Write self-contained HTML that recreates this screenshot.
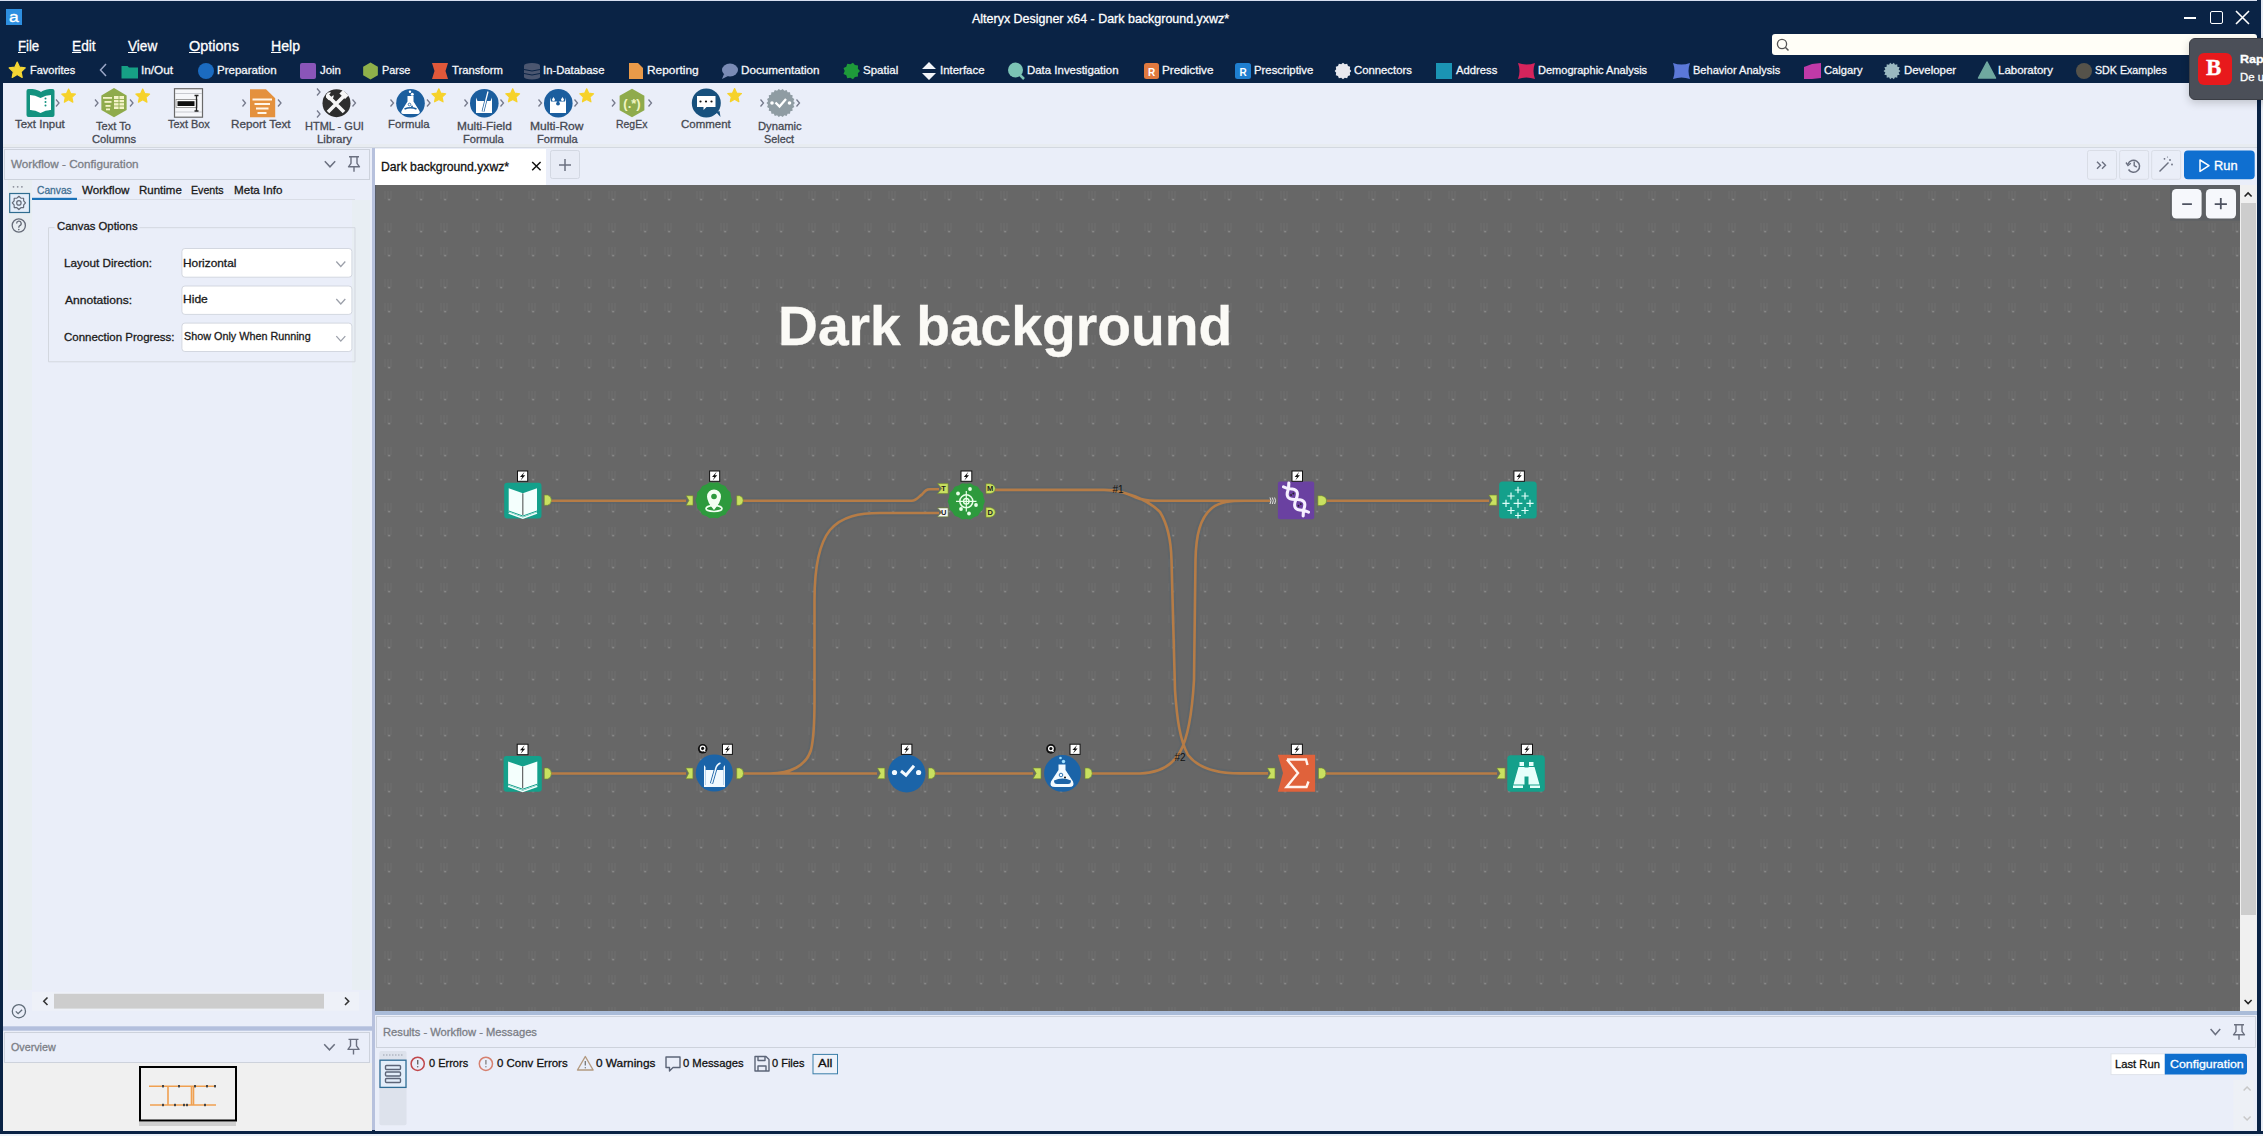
<!DOCTYPE html>
<html><head><meta charset="utf-8"><style>
html,body{margin:0;padding:0;}
body{width:2263px;height:1136px;position:relative;overflow:hidden;background:#0a2345;font-family:"Liberation Sans",sans-serif;}
.a{position:absolute;}
.t{position:absolute;white-space:nowrap;line-height:1;-webkit-text-stroke:0.3px currentColor;}
svg{overflow:visible;}
</style></head><body>
<div class="a" style="left:0px;top:0px;width:2263px;height:1px;background:#d8dff0"></div>
<div class="t" style="left:972.00px;top:11.50px;font-size:13px;color:#fff;transform:scaleX(0.9594);transform-origin:0 0;">Alteryx Designer x64 - Dark background.yxwz*</div>
<div class="a" style="left:6px;top:9px;width:16px;height:16px;background:#2e8fe0"></div>
<div class="t" style="left:9.30px;top:10.15px;font-size:14px;color:#fff;transform:scaleX(1.2483);transform-origin:0 0;">a</div>
<div class="a" style="left:2184px;top:17px;width:12px;height:2px;background:#fff"></div>
<div class="a" style="left:2210px;top:11px;width:11px;height:11px;border:1.5px solid #fff;border-radius:2px"></div>
<svg class="a" style="left:2236px;top:11px;" width="13" height="13" viewBox="0 0 13 13"><path d="M0 0L13 13M13 0L0 13" stroke="#fff" stroke-width="1.6"/></svg>
<div class="t" style="left:18.45px;top:39.35px;font-size:14px;color:#fff;transform:scaleX(0.9380);transform-origin:0 0;"><u>F</u>ile</div>
<div class="t" style="left:71.50px;top:39.35px;font-size:14px;color:#fff;transform:scaleX(0.9786);transform-origin:0 0;"><u>E</u>dit</div>
<div class="t" style="left:128.23px;top:39.35px;font-size:14px;color:#fff;transform:scaleX(0.9724);transform-origin:0 0;"><u>V</u>iew</div>
<div class="t" style="left:189.35px;top:39.35px;font-size:14px;color:#fff;transform:scaleX(1.0338);transform-origin:0 0;"><u>O</u>ptions</div>
<div class="t" style="left:271.27px;top:39.35px;font-size:14px;color:#fff;transform:scaleX(1.0078);transform-origin:0 0;"><u>H</u>elp</div>
<div class="a" style="left:1772px;top:34px;width:485px;height:21px;background:#fffef7;border-radius:3px"></div>
<svg class="a" style="left:1776px;top:38px;" width="14" height="14" viewBox="0 0 14 14"><circle cx="6" cy="6" r="4.6" fill="none" stroke="#555" stroke-width="1.3"/><path d="M9.3 9.3L12.5 12.5" stroke="#555" stroke-width="1.5"/></svg>
<div class="t" style="left:29.82px;top:64.52px;font-size:11.2px;color:#f4f6fa;transform:scaleX(0.9834);transform-origin:0 0;">Favorites</div>
<div class="t" style="left:140.94px;top:64.52px;font-size:11.2px;color:#f4f6fa;transform:scaleX(1.0544);transform-origin:0 0;">In/Out</div>
<div class="t" style="left:217.08px;top:64.52px;font-size:11.2px;color:#f4f6fa;transform:scaleX(1.0306);transform-origin:0 0;">Preparation</div>
<div class="t" style="left:319.83px;top:64.52px;font-size:11.2px;color:#f4f6fa;transform:scaleX(1.0175);transform-origin:0 0;">Join</div>
<div class="t" style="left:382.13px;top:64.52px;font-size:11.2px;color:#f4f6fa;transform:scaleX(0.9701);transform-origin:0 0;">Parse</div>
<div class="t" style="left:451.77px;top:64.52px;font-size:11.2px;color:#f4f6fa;transform:scaleX(1.0066);transform-origin:0 0;">Transform</div>
<div class="t" style="left:542.98px;top:64.52px;font-size:11.2px;color:#f4f6fa;transform:scaleX(1.0089);transform-origin:0 0;">In-Database</div>
<div class="t" style="left:647.05px;top:64.52px;font-size:11.2px;color:#f4f6fa;transform:scaleX(1.0655);transform-origin:0 0;">Reporting</div>
<div class="t" style="left:741.06px;top:64.52px;font-size:11.2px;color:#f4f6fa;transform:scaleX(1.0448);transform-origin:0 0;">Documentation</div>
<div class="t" style="left:863.48px;top:64.52px;font-size:11.2px;color:#f4f6fa;transform:scaleX(1.0308);transform-origin:0 0;">Spatial</div>
<div class="t" style="left:939.97px;top:64.52px;font-size:11.2px;color:#f4f6fa;transform:scaleX(1.0224);transform-origin:0 0;">Interface</div>
<div class="t" style="left:1027.08px;top:64.52px;font-size:11.2px;color:#f4f6fa;transform:scaleX(1.0224);transform-origin:0 0;">Data Investigation</div>
<div class="t" style="left:1162.06px;top:64.52px;font-size:11.2px;color:#f4f6fa;transform:scaleX(1.0467);transform-origin:0 0;">Predictive</div>
<div class="t" style="left:1254.09px;top:64.52px;font-size:11.2px;color:#f4f6fa;transform:scaleX(1.0154);transform-origin:0 0;">Prescriptive</div>
<div class="t" style="left:1354.43px;top:64.52px;font-size:11.2px;color:#f4f6fa;transform:scaleX(1.0118);transform-origin:0 0;">Connectors</div>
<div class="t" style="left:1456.00px;top:64.52px;font-size:11.2px;color:#f4f6fa;transform:scaleX(1.0071);transform-origin:0 0;">Address</div>
<div class="t" style="left:1538.12px;top:64.52px;font-size:11.2px;color:#f4f6fa;transform:scaleX(0.9860);transform-origin:0 0;">Demographic Analysis</div>
<div class="t" style="left:1693.12px;top:64.52px;font-size:11.2px;color:#f4f6fa;transform:scaleX(0.9870);transform-origin:0 0;">Behavior Analysis</div>
<div class="t" style="left:1824.44px;top:64.52px;font-size:11.2px;color:#f4f6fa;transform:scaleX(0.9994);transform-origin:0 0;">Calgary</div>
<div class="t" style="left:1904.09px;top:64.52px;font-size:11.2px;color:#f4f6fa;transform:scaleX(1.0210);transform-origin:0 0;">Developer</div>
<div class="t" style="left:1998.08px;top:64.52px;font-size:11.2px;color:#f4f6fa;transform:scaleX(1.0258);transform-origin:0 0;">Laboratory</div>
<div class="t" style="left:2094.52px;top:64.52px;font-size:11.2px;color:#f4f6fa;transform:scaleX(0.9540);transform-origin:0 0;">SDK Examples</div>
<svg class="a" style="left:0px;top:0px;" width="1" height="1" viewBox="0 0 1 1"><polygon points="17.20,62.00 19.60,67.20 25.28,67.87 21.08,71.76 22.20,77.38 17.20,74.58 12.20,77.38 13.32,71.76 9.12,67.87 14.80,67.20" fill="#f4d634" stroke="#f4d634" stroke-width="1.2" stroke-linejoin="round"/><path d="M106 64L100.5 70L106 76" fill="none" stroke="#9aa6c6" stroke-width="1.5"/><path d="M121.5 66h6l1.5 1.5h9v11h-16.5z" fill="#16a085"/><circle cx="206" cy="71" r="8" fill="#1b6bc0"/><rect x="300" y="63" width="16" height="16" rx="2" fill="#8a55b8"/><polygon points="370.50,62.50 377.86,66.75 377.86,75.25 370.50,79.50 363.14,75.25 363.14,66.75" fill="#8fb04a"/><path d="M432 63h16l-2.5 8 2.5 8h-16l2.5-8z" fill="#e0583a"/><ellipse cx="532" cy="65.5" rx="8" ry="2.5" fill="#4b5670"/><rect x="524" y="66" width="16" height="11" fill="#4b5670"/><ellipse cx="532" cy="77" rx="8" ry="2.5" fill="#4b5670"/><path d="M524 69.5q8 3 16 0M524 73.5q8 3 16 0" stroke="#0a2345" stroke-width="1" fill="none"/><path d="M629 63h9l5 5v11h-14z" fill="#e99a49"/><ellipse cx="730" cy="70" rx="8" ry="6.5" fill="#7a8bb5"/><path d="M724 74l-2 5 6-3z" fill="#7a8bb5"/><polygon points="860.00,71.00 857.89,73.33 858.01,76.46 854.90,76.89 852.98,79.37 850.32,77.70 847.25,78.36 846.29,75.37 843.51,73.91 844.70,71.00 843.51,68.09 846.29,66.63 847.25,63.64 850.32,64.30 852.98,62.63 854.90,65.11 858.01,65.54 857.89,68.67" fill="#1e9a3a"/><path d="M929 62l7 7h-14z M929 80l7-7h-14z" fill="#f2f4f8"/><circle cx="1015.5" cy="70" r="7.5" fill="#7cc4b5"/><path d="M1020 75l4 4" stroke="#7cc4b5" stroke-width="2.5"/><rect x="1144" y="63" width="15" height="16" rx="2.5" fill="#e0793f"/><text x="1151.5" y="76" font-size="10" font-weight="bold" fill="#fff" text-anchor="middle" font-family="Liberation Sans">R</text><rect x="1235" y="63" width="16" height="16" rx="2.5" fill="#1f7fd0"/><text x="1243" y="76" font-size="10" font-weight="bold" fill="#fff" text-anchor="middle" font-family="Liberation Sans">R</text><polygon points="1351.30,71.00 1349.81,72.83 1350.19,75.15 1347.99,75.99 1347.15,78.19 1344.83,77.81 1343.00,79.30 1341.17,77.81 1338.85,78.19 1338.01,75.99 1335.81,75.15 1336.19,72.83 1334.70,71.00 1336.19,69.17 1335.81,66.85 1338.01,66.01 1338.85,63.81 1341.17,64.19 1343.00,62.70 1344.83,64.19 1347.15,63.81 1347.99,66.01 1350.19,66.85 1349.81,69.17" fill="#e8e8ee"/><rect x="1436" y="63" width="16" height="16" fill="#1b94b4"/><path d="M1518 63q8.5 3 17 0q-3 8 0 16q-8.5-3-17 0q3-8 0-16z" fill="#d5245c"/><path d="M1673 63q8.5 3 17 0q-3 8 0 16q-8.5-3-17 0q3-8 0-16z" fill="#5b78d8"/><path d="M1804 67l8-3l9 -1v15l-9 1l-8 0z" fill="#c03aa8"/><polygon points="1900.50,71.00 1898.63,72.51 1899.66,74.69 1897.32,75.24 1897.30,77.65 1894.95,77.13 1893.89,79.29 1892.00,77.80 1890.11,79.29 1889.05,77.13 1886.70,77.65 1886.68,75.24 1884.34,74.69 1885.37,72.51 1883.50,71.00 1885.37,69.49 1884.34,67.31 1886.68,66.76 1886.70,64.35 1889.05,64.87 1890.11,62.71 1892.00,64.20 1893.89,62.71 1894.95,64.87 1897.30,64.35 1897.32,66.76 1899.66,67.31 1898.63,69.49" fill="#9ab8c0"/><path d="M1987 62l8.5 16h-17z" fill="#6fa8a0" stroke="#6fa8a0" stroke-width="1.5" stroke-linejoin="round"/><circle cx="2084" cy="71" r="8" fill="#55524a"/></svg>
<div class="a" style="left:3px;top:83px;width:2254px;height:65px;background:#eaeef9"></div>
<div class="a" style="left:3px;top:144px;width:2254px;height:4px;background:#e8ecf1"></div>
<div class="a" style="left:3px;top:147px;width:2254px;height:1.2px;background:#d3d8e0"></div>
<svg class="a" style="left:0px;top:0px;" width="1" height="1" viewBox="0 0 1 1"><path d="M26.5 91q0-2 2-2h4q6 1 8.5 3q2.5-2 8.5-3h3q2 0 2 2v24q0 2-2 2h-24q-2 0-2-2z" fill="#13927f"/><path d="M30 95q5 0 10.5 3v15q-5-3-10.5-3z M51 95q-5 0-10.5 3v15q5-3 10.5-3z" fill="#fff"/><path d="M30 110.5l10.5 4.5l10.5-4.5" fill="none" stroke="#13927f" stroke-width="1"/><circle cx="45.5" cy="98.5" r="1" fill="#13927f"/><circle cx="45.5" cy="102" r="1" fill="#13927f"/><circle cx="45.5" cy="105.5" r="1" fill="#13927f"/><path d="M56.0 99.5L59.0 103L56.0 106.5" fill="none" stroke="#767a8c" stroke-width="1.3"/><polygon points="68.60,89.10 70.63,93.50 75.45,94.08 71.89,97.37 72.83,102.12 68.60,99.76 64.37,102.12 65.31,97.37 61.75,94.08 66.57,93.50" fill="#f6d22a" stroke="#f6d22a" stroke-width="1.2" stroke-linejoin="round"/><path d="M95.0 99.5L98.0 103L95.0 106.5" fill="none" stroke="#767a8c" stroke-width="1.3"/><polygon points="114.00,88.10 126.64,95.40 126.64,110.00 114.00,117.30 101.36,110.00 101.36,95.40" fill="#8fab4c"/><path d="M130.0 99.5L133.0 103L130.0 106.5" fill="none" stroke="#767a8c" stroke-width="1.3"/><polygon points="142.70,89.10 144.73,93.50 149.55,94.08 145.99,97.37 146.93,102.12 142.70,99.76 138.47,102.12 139.41,97.37 135.85,94.08 140.67,93.50" fill="#f6d22a" stroke="#f6d22a" stroke-width="1.2" stroke-linejoin="round"/><rect x="103" y="97" width="9" height="1.8" fill="#f4f3c8"/><rect x="104.5" y="101" width="7" height="1.8" fill="#f4f3c8"/><rect x="105.5" y="105" width="5" height="1.8" fill="#f4f3c8"/><rect x="106" y="108.5" width="4" height="1.8" fill="#f4f3c8"/><rect x="114" y="96" width="10" height="13" fill="#f4f3c8"/><path d="M114 99.5h10M114 102.7h10M114 106h10M119 96v13" stroke="#8fab4c" stroke-width="0.9"/><rect x="174.5" y="88.7" width="28" height="28.5" fill="#f6f7fa" stroke="#6a6a6a" stroke-width="1.2"/><path d="M175 93.5h27M175 112h27" stroke="#c8cad0" stroke-width="1"/><rect x="176" y="99.5" width="21" height="8" fill="#fff" stroke="#888" stroke-width="0.8"/><rect x="177.5" y="101.2" width="17" height="4.8" fill="#111"/><path d="M194.5 95.5h4M196.5 95.5v15.5M194.5 111h4" stroke="#222" stroke-width="1.3"/><path d="M242.5 99.5L245.5 103L242.5 106.5" fill="none" stroke="#767a8c" stroke-width="1.3"/><path d="M250 89.3h16l9.2 9v18.9h-25.2z" fill="#e4913d"/><path d="M278.0 99.5L281.0 103L278.0 106.5" fill="none" stroke="#767a8c" stroke-width="1.3"/><rect x="252.5" y="98.5" width="19.5" height="2" fill="#fff6e8"/><rect x="254.5" y="103" width="15.5" height="2" fill="#fff6e8"/><rect x="256" y="107.5" width="12.5" height="2" fill="#fff6e8"/><rect x="257.5" y="112" width="9" height="2" fill="#fff6e8"/><path d="M317.0 88.5L320.0 92L317.0 95.5" fill="none" stroke="#767a8c" stroke-width="1.3"/><path d="M317.0 110.5L320.0 114L317.0 117.5" fill="none" stroke="#767a8c" stroke-width="1.3"/><circle cx="336.5" cy="103.2" r="14" fill="#2d2d2d"/><path d="M352.5 99.5L355.5 103L352.5 106.5" fill="none" stroke="#767a8c" stroke-width="1.3"/><path d="M328 96l16 16M344.5 95.5l-16.5 16.5" stroke="#f6f6f6" stroke-width="3.6"/><path d="M326 97.5a4 4 0 0 1 5-5l-2 2.5 2 2 2.5-2a4 4 0 0 1-5 5z" fill="#f6f6f6"/><rect x="340" y="92" width="8" height="5" transform="rotate(45 344 94.5)" fill="#f6f6f6"/><path d="M390.5 99.5L393.5 103L390.5 106.5" fill="none" stroke="#767a8c" stroke-width="1.3"/><circle cx="410.5" cy="103.2" r="14.3" fill="#1b5e9e"/><path d="M427.0 99.5L430.0 103L427.0 106.5" fill="none" stroke="#767a8c" stroke-width="1.3"/><polygon points="438.80,88.80 440.83,93.20 445.65,93.78 442.09,97.07 443.03,101.82 438.80,99.46 434.57,101.82 435.51,97.07 431.95,93.78 436.77,93.20" fill="#f6d22a" stroke="#f6d22a" stroke-width="1.2" stroke-linejoin="round"/><path d="M407.5 96v5.5l-6 9.5q-1 3 2 3h14q3 0 2-3l-6-9.5v-5.5" fill="#fff"/><path d="M404.5 109q6-2.5 12 0" stroke="#1b5e9e" stroke-width="1.6" fill="none"/><circle cx="410" cy="91.8" r="1.2" fill="#fff"/><circle cx="412.3" cy="94.3" r="1.5" fill="#fff"/><circle cx="409.5" cy="104.5" r="1.3" fill="none" stroke="#1b5e9e" stroke-width="0.8"/><circle cx="412" cy="106.5" r="0.9" fill="#1b5e9e"/><path d="M464.5 99.5L467.5 103L464.5 106.5" fill="none" stroke="#767a8c" stroke-width="1.3"/><circle cx="484.3" cy="103.2" r="14.3" fill="#1b5e9e"/><path d="M500.5 99.5L503.5 103L500.5 106.5" fill="none" stroke="#767a8c" stroke-width="1.3"/><polygon points="512.70,88.80 514.73,93.20 519.55,93.78 515.99,97.07 516.93,101.82 512.70,99.46 508.47,101.82 509.41,97.07 505.85,93.78 510.67,93.20" fill="#f6d22a" stroke="#f6d22a" stroke-width="1.2" stroke-linejoin="round"/><path d="M476 97.5v15.5h16v-15.5l-1.5 3.5h-13z" fill="#fff"/><path d="M483 111.5l5-20" stroke="#1b5e9e" stroke-width="2.8"/><path d="M483 111.5l5-20" stroke="#fff" stroke-width="1.3"/><path d="M538.5 99.5L541.5 103L538.5 106.5" fill="none" stroke="#767a8c" stroke-width="1.3"/><circle cx="558.3" cy="103.2" r="14.3" fill="#1b5e9e"/><path d="M574.5 99.5L577.5 103L574.5 106.5" fill="none" stroke="#767a8c" stroke-width="1.3"/><polygon points="586.70,88.80 588.73,93.20 593.55,93.78 589.99,97.07 590.93,101.82 586.70,99.46 582.47,101.82 583.41,97.07 579.85,93.78 584.67,93.20" fill="#f6d22a" stroke="#f6d22a" stroke-width="1.2" stroke-linejoin="round"/><path d="M550 97.5v15.5h16v-15.5l-1 4h-14z" fill="#fff"/><path d="M553.5 97l1.5 2.5a1.5 1.5 0 0 1-3 0z M562.5 97l1.5 2.5a1.5 1.5 0 0 1-3 0z" fill="#fff"/><path d="M558 100l2 3.5a2 2 0 0 1-4 0z" fill="#1b5e9e"/><path d="M612.0 99.5L615.0 103L612.0 106.5" fill="none" stroke="#767a8c" stroke-width="1.3"/><polygon points="632.00,88.70 644.38,95.85 644.38,110.15 632.00,117.30 619.62,110.15 619.62,95.85" fill="#8fab4c"/><path d="M648.5 99.5L651.5 103L648.5 106.5" fill="none" stroke="#767a8c" stroke-width="1.3"/><text x="632" y="107.5" font-size="13" font-weight="bold" fill="#f2f5c2" text-anchor="middle" font-family="Liberation Sans">(.*)</text><circle cx="706.3" cy="103" r="14.5" fill="#17507d"/><path d="M716 112l4.5 5-1-6z" fill="#17507d"/><path d="M697 96h18.5v11h-9l-3 3v-3h-6.5z" fill="#fff"/><circle cx="700.5" cy="101.5" r="1.1" fill="#111"/><circle cx="706" cy="101.5" r="1.1" fill="#111"/><circle cx="711.5" cy="101.5" r="1.1" fill="#111"/><polygon points="734.60,88.60 736.63,93.00 741.45,93.58 737.89,96.87 738.83,101.62 734.60,99.26 730.37,101.62 731.31,96.87 727.75,93.58 732.57,93.00" fill="#f6d22a" stroke="#f6d22a" stroke-width="1.2" stroke-linejoin="round"/><path d="M760.5 99.5L763.5 103L760.5 106.5" fill="none" stroke="#767a8c" stroke-width="1.3"/><polygon points="794.90,103.00 793.35,104.82 794.32,107.00 792.33,108.31 792.65,110.68 790.36,111.37 790.00,113.73 787.61,113.75 786.60,115.92 784.30,115.26 782.72,117.06 780.70,115.78 778.68,117.06 777.10,115.26 774.80,115.92 773.79,113.75 771.40,113.73 771.04,111.37 768.75,110.68 769.07,108.31 767.08,107.00 768.05,104.82 766.50,103.00 768.05,101.18 767.08,99.00 769.07,97.69 768.75,95.32 771.04,94.63 771.40,92.27 773.79,92.25 774.80,90.08 777.10,90.74 778.68,88.94 780.70,90.22 782.72,88.94 784.30,90.74 786.60,90.08 787.61,92.25 790.00,92.27 790.36,94.63 792.65,95.32 792.33,97.69 794.32,99.00 793.35,101.18" fill="#8f9ca3"/><path d="M796.5 99.5L799.5 103L796.5 106.5" fill="none" stroke="#767a8c" stroke-width="1.3"/><circle cx="772" cy="103" r="1.8" fill="#fff"/><circle cx="789.5" cy="103" r="1.8" fill="#fff"/><path d="M775.5 102.5l4 4 6.5-7.5" fill="none" stroke="#fff" stroke-width="2.3"/></svg>
<div class="t" style="left:15.37px;top:119.29px;font-size:11px;color:#464952;transform:scaleX(1.0420);transform-origin:0 0;">Text Input</div>
<div class="t" style="left:96.18px;top:120.59px;font-size:11px;color:#464952;transform:scaleX(1.0062);transform-origin:0 0;">Text To</div>
<div class="t" style="left:91.84px;top:133.89px;font-size:11px;color:#464952;transform:scaleX(1.0151);transform-origin:0 0;">Columns</div>
<div class="t" style="left:167.58px;top:119.29px;font-size:11px;color:#464952;transform:scaleX(0.9915);transform-origin:0 0;">Text Box</div>
<div class="t" style="left:231.46px;top:119.29px;font-size:11px;color:#464952;transform:scaleX(1.0633);transform-origin:0 0;">Report Text</div>
<div class="t" style="left:305.12px;top:120.59px;font-size:11px;color:#464952;transform:scaleX(1.0004);transform-origin:0 0;">HTML - GUI</div>
<div class="t" style="left:317.09px;top:134.09px;font-size:11px;color:#464952;transform:scaleX(1.0390);transform-origin:0 0;">Library</div>
<div class="t" style="left:388.09px;top:119.29px;font-size:11px;color:#464952;transform:scaleX(1.0321);transform-origin:0 0;">Formula</div>
<div class="t" style="left:456.65px;top:120.59px;font-size:11px;color:#464952;transform:scaleX(1.0791);transform-origin:0 0;">Multi-Field</div>
<div class="t" style="left:462.71px;top:134.09px;font-size:11px;color:#464952;transform:scaleX(1.0093);transform-origin:0 0;">Formula</div>
<div class="t" style="left:530.04px;top:120.59px;font-size:11px;color:#464952;transform:scaleX(1.0942);transform-origin:0 0;">Multi-Row</div>
<div class="t" style="left:536.81px;top:134.09px;font-size:11px;color:#464952;transform:scaleX(1.0093);transform-origin:0 0;">Formula</div>
<div class="t" style="left:615.76px;top:119.29px;font-size:11px;color:#464952;transform:scaleX(0.9497);transform-origin:0 0;">RegEx</div>
<div class="t" style="left:681.03px;top:119.29px;font-size:11px;color:#464952;transform:scaleX(1.0441);transform-origin:0 0;">Comment</div>
<div class="t" style="left:757.60px;top:120.59px;font-size:11px;color:#464952;transform:scaleX(1.0208);transform-origin:0 0;">Dynamic</div>
<div class="t" style="left:763.51px;top:134.09px;font-size:11px;color:#464952;transform:scaleX(0.9842);transform-origin:0 0;">Select</div>
<div class="a" style="left:3px;top:148px;width:369px;height:982px;background:#eaeef9"></div>
<div class="a" style="left:372px;top:148px;width:3px;height:982px;background:#b7c1dd"></div>
<div class="a" style="left:375px;top:148px;width:1882px;height:37px;background:#eaeef9"></div>
<div class="a" style="left:375px;top:149px;width:171px;height:36px;background:#fff"></div>
<div class="a" style="left:375px;top:185px;width:1865px;height:826px;background:#676767"></div>
<div class="a" style="left:375px;top:185px;width:1px;height:826px;background:#585d68"></div>
<div class="a" style="left:2240px;top:185px;width:17px;height:826px;background:#f0f0f0"></div>
<div class="a" style="left:2241px;top:203px;width:15px;height:712px;background:#cdcdcd"></div>
<svg class="a" style="left:375px;top:185px" width="1865" height="826"><defs><pattern id="g" x="9.5" y="6" width="56" height="56" patternUnits="userSpaceOnUse"><g transform="translate(4 8)"><rect x="-0.2" y="-0.2" width="1.6" height="1.6" fill="#959595"/><rect x="-4" y="-8" width="1" height="8" fill="#fff" opacity="0.06"/><rect x="-1" y="-8" width="1" height="8" fill="#fff" opacity="0.06"/><rect x="2" y="-8" width="1" height="8" fill="#fff" opacity="0.06"/></g><g transform="translate(4 40)"><rect x="-0.2" y="-0.2" width="1.6" height="1.6" fill="#959595"/><rect x="-4" y="-8" width="1" height="8" fill="#fff" opacity="0.06"/><rect x="-1" y="-8" width="1" height="8" fill="#fff" opacity="0.06"/><rect x="2" y="-8" width="1" height="8" fill="#fff" opacity="0.06"/></g><g transform="translate(36 8)"><rect x="-0.2" y="-0.2" width="1.6" height="1.6" fill="#959595"/><rect x="-4" y="-8" width="1" height="8" fill="#fff" opacity="0.06"/><rect x="-1" y="-8" width="1" height="8" fill="#fff" opacity="0.06"/><rect x="2" y="-8" width="1" height="8" fill="#fff" opacity="0.06"/></g><g transform="translate(36 40)"><rect x="-0.2" y="-0.2" width="1.6" height="1.6" fill="#959595"/><rect x="-4" y="-8" width="1" height="8" fill="#fff" opacity="0.06"/><rect x="-1" y="-8" width="1" height="8" fill="#fff" opacity="0.06"/><rect x="2" y="-8" width="1" height="8" fill="#fff" opacity="0.06"/></g></pattern></defs><rect width="1865" height="826" fill="url(#g)"/></svg>
<div class="t" style="left:778.11px;top:298.20px;font-size:56px;color:#fbfaf6;transform:scaleX(0.9863);transform-origin:0 0;font-weight:bold;">Dark background</div>
<svg class="a" style="left:0px;top:0px;" width="1" height="1" viewBox="0 0 1 1"><path d="M551 500.7H686M743 500.7H911.7C917 500.7 919 496 922 494.5C925 491 926 489.3 930 489.3H939M1326.5 500.7H1489M551 773.5H686M743.5 773.5H877M935 773.5H1033M1326 773.5H1497 M743.5 773.5H770C790 773.5 806 766 811 750C813.5 740 814.5 725 814.5 700V600C814.5 570 818 545 830 530C842 516 860 513 880 513H939 M995 489.9H1104C1120 490 1128 494 1136 497.5C1142 500 1146 500.7 1155 500.7H1270 M1104 490C1125 490 1148 500 1160 512C1168 525 1171 540 1171.5 560L1175 690C1177 720 1180 740 1188 755C1198 768 1215 773.4 1240 773.4H1268 M1092 773.5H1140C1158 773 1172 766 1180 752C1188 738 1192 715 1194 680L1195.5 560C1196 535 1200 518 1212 508C1220 502 1230 500.7 1245 500.7H1270 " fill="none" stroke="#56636e" stroke-opacity="0.4" stroke-width="6.5"/><path d="M551 500.7H686M743 500.7H911.7C917 500.7 919 496 922 494.5C925 491 926 489.3 930 489.3H939M1326.5 500.7H1489M551 773.5H686M743.5 773.5H877M935 773.5H1033M1326 773.5H1497 M743.5 773.5H770C790 773.5 806 766 811 750C813.5 740 814.5 725 814.5 700V600C814.5 570 818 545 830 530C842 516 860 513 880 513H939 M995 489.9H1104C1120 490 1128 494 1136 497.5C1142 500 1146 500.7 1155 500.7H1270 M1104 490C1125 490 1148 500 1160 512C1168 525 1171 540 1171.5 560L1175 690C1177 720 1180 740 1188 755C1198 768 1215 773.4 1240 773.4H1268 M1092 773.5H1140C1158 773 1172 766 1180 752C1188 738 1192 715 1194 680L1195.5 560C1196 535 1200 518 1212 508C1220 502 1230 500.7 1245 500.7H1270 " fill="none" stroke="#b67c46" stroke-width="2.6"/><text x="1112.5" y="492.5" font-size="10" fill="#111" font-family="Liberation Sans">#1</text><text x="1174.5" y="760.5" font-size="10" fill="#111" font-family="Liberation Sans">#2</text><path d="M504.2 485.8q0-3 3-3h15.650000000000006q0 1.5 0 1.5q0-1.5 0-1.5h15.650000000000006q3 0 3 3v29.69999999999999q0 3-3 3h-31.30000000000001q-3 0-3-3z" fill="#14a08b"/><path d="M508.7 488.3l14.150000000000006 5v23.69999999999999l-14.150000000000006-5z M537.0 488.3l-14.150000000000006 5v23.69999999999999l14.150000000000006-5z" fill="#f4fffd"/><path d="M508.7 511.0l14.150000000000006 5l14.150000000000006-5" fill="none" stroke="#14a08b" stroke-width="1"/><path d="M508.7 513.0l14.150000000000006 5.2l14.150000000000006-5.2" fill="none" stroke="#f4fffd" stroke-width="1.6"/><path d="M522.85 493.3v21.69999999999999" stroke="#333" stroke-width="0.9"/><rect x="517.5" y="471" width="10.200000000000045" height="10.300000000000011" fill="#fff" stroke="#111" stroke-width="1"/><path d="M524.6 471.84999999999997L520.0 476.95H522.4L520.6 480.45L525.2 475.34999999999997H522.8000000000001z" fill="#111"/><path d="M544.3 495.1h3.1950000000000105q3.9050000000000127 1.019999999999999 3.9050000000000127 5.099999999999994q0 4.079999999999996 -3.9050000000000127 5.099999999999994h-3.1950000000000105z" fill="#c9e060" stroke="#6f8a2a" stroke-width="0.6"/><polygon points="732.20,500.30 730.84,504.19 730.38,508.28 727.47,511.20 725.27,514.69 721.38,516.05 717.89,518.24 713.80,517.78 709.71,518.24 706.22,516.05 702.33,514.69 700.13,511.20 697.22,508.28 696.76,504.19 695.40,500.30 696.76,496.41 697.22,492.32 700.13,489.40 702.33,485.91 706.22,484.55 709.71,482.36 713.80,482.82 717.89,482.36 721.38,484.55 725.27,485.91 727.47,489.40 730.38,492.32 730.84,496.41" fill="#2d9a3d"/><path d="M714 510q-7-8-7-13.5a7 7 0 0 1 14 0q0 5.5-7 13.5z" fill="#f2fff2"/><circle cx="714" cy="496.5" r="2.8" fill="#2d9a3d"/><ellipse cx="714" cy="508.5" rx="8" ry="3" fill="none" stroke="#f2fff2" stroke-width="1.6"/><rect x="709.6" y="471" width="10.100000000000023" height="10.300000000000011" fill="#fff" stroke="#111" stroke-width="1"/><path d="M716.6500000000001 471.84999999999997L712.0500000000001 476.95H714.45L712.6500000000001 480.45L717.2500000000001 475.34999999999997H714.8500000000001z" fill="#111"/><path d="M686.2 495.7H693V505.3H686.2L688.9200000000001 500.5z" fill="#c9e060" stroke="#6f8a2a" stroke-width="0.6"/><path d="M736.7 495.7h2.9250000000000003q3.575 0.9600000000000023 3.575 4.800000000000011q0 3.840000000000009 -3.575 4.800000000000011h-2.9250000000000003z" fill="#c9e060" stroke="#6f8a2a" stroke-width="0.6"/><polygon points="984.90,501.30 983.53,505.23 983.06,509.37 980.11,512.32 977.90,515.84 973.97,517.22 970.44,519.43 966.30,518.97 962.16,519.43 958.63,517.22 954.70,515.84 952.49,512.32 949.54,509.37 949.07,505.23 947.70,501.30 949.07,497.37 949.54,493.23 952.49,490.28 954.70,486.76 958.63,485.38 962.16,483.17 966.30,483.63 970.44,483.17 973.97,485.38 977.90,486.76 980.11,490.28 983.06,493.23 983.53,497.37" fill="#2d9a3d"/><circle cx="966.3" cy="501.3" r="6.5" fill="none" stroke="#e8ffe8" stroke-width="1.5"/><circle cx="966.3" cy="501.3" r="2.8" fill="none" stroke="#e8ffe8" stroke-width="1.4"/><path d="M956 501.3h20.5M966.3 491v20.5" stroke="#e8ffe8" stroke-width="1.2"/><circle cx="958" cy="493.5" r="1.9" fill="#e8ffe8"/><circle cx="970" cy="489" r="1.9" fill="#e8ffe8"/><circle cx="976" cy="505" r="1.9" fill="#e8ffe8"/><circle cx="961" cy="509" r="1.9" fill="#e8ffe8"/><circle cx="969" cy="513.5" r="1.9" fill="#e8ffe8"/><rect x="961" y="471" width="10.799999999999955" height="10.300000000000011" fill="#fff" stroke="#111" stroke-width="1"/><path d="M968.4 471.84999999999997L963.8 476.95H966.1999999999999L964.4 480.45L969.0 475.34999999999997H966.6z" fill="#111"/><path d="M937.5 483.6H948.1V493.6H937.5L941.74 488.6z" fill="#c9e060" stroke="#6f8a2a" stroke-width="0.6"/><text x="943.5999999999999" y="491.40000000000003" font-size="7.5" font-weight="bold" fill="#222" text-anchor="middle" font-family="Liberation Sans">T</text><path d="M937.5 507.9H948.1V516.8H937.5L941.74 512.3499999999999z" fill="#f6f6f6" stroke="#6f8a2a" stroke-width="0.6"/><text x="943.5999999999999" y="514.5999999999999" font-size="7.5" font-weight="bold" fill="#222" text-anchor="middle" font-family="Liberation Sans">U</text><path d="M986 483.7h4.140000000000021q5.060000000000025 0.9900000000000034 5.060000000000025 4.950000000000017q0 3.9600000000000137 -5.060000000000025 4.950000000000017h-4.140000000000021z" fill="#c9e060" stroke="#6f8a2a" stroke-width="0.6"/><text x="990.1" y="491.40000000000003" font-size="7.5" font-weight="bold" fill="#222" text-anchor="middle" font-family="Liberation Sans">M</text><path d="M986 507.4h4.140000000000021q5.060000000000025 0.9899999999999978 5.060000000000025 4.949999999999989q0 3.959999999999991 -5.060000000000025 4.949999999999989h-4.140000000000021z" fill="#c9e060" stroke="#6f8a2a" stroke-width="0.6"/><text x="990.1" y="515.0999999999999" font-size="7.5" font-weight="bold" fill="#222" text-anchor="middle" font-family="Liberation Sans">D</text><rect x="1277.9" y="481.6" width="36.3" height="37.6" rx="2" fill="#6a41a1"/><g transform="translate(1296 499.5) rotate(55)"><path d="M-13 0C-8.7 -7 -4.3 -7 0 0C4.3 7 8.7 7 13 0M-13 0C-8.7 7 -4.3 7 0 0C4.3 -7 8.7 -7 13 0M-13 0L-17.5 -3.5M-13 0L-17.5 3M13 0L17.5 3.5M13 0L17.5 -3" fill="none" stroke="#f6f0ff" stroke-width="3.1" stroke-linecap="round"/><circle cx="-6.5" cy="-1.3" r="0.9" fill="#222"/><circle cx="-6.5" cy="1.5" r="0.9" fill="#222"/><circle cx="6.5" cy="-1.3" r="0.9" fill="#222"/><circle cx="6.5" cy="1.5" r="0.9" fill="#222"/></g><rect x="1292" y="471" width="10.5" height="10.300000000000011" fill="#fff" stroke="#111" stroke-width="1"/><path d="M1299.25 471.84999999999997L1294.65 476.95H1297.05L1295.25 480.45L1299.85 475.34999999999997H1297.45z" fill="#111"/><path d="M1270 497.5q2 3 0 6.5M1272.3 497.5q2 3 0 6.5M1274.6 497.5q2 3 0 6.5" fill="none" stroke="#f0f0f0" stroke-width="0.9"/><path d="M1317.9 495.7h3.8699999999999593q4.729999999999951 0.9900000000000034 4.729999999999951 4.950000000000017q0 3.9600000000000137 -4.729999999999951 4.950000000000017h-3.8699999999999593z" fill="#c9e060" stroke="#6f8a2a" stroke-width="0.6"/><rect x="1499.1" y="481.6" width="37.6" height="36.9" rx="3.5" fill="#14a08b"/><path d="M1514.8 490h6.4M1518 486.8v6.4" stroke="#e0fffa" stroke-width="1.2"/><path d="M1507.4 496h7.2M1511 492.4v7.2" stroke="#e0fffa" stroke-width="1.2"/><path d="M1521.4 496h7.2M1525 492.4v7.2" stroke="#e0fffa" stroke-width="1.2"/><path d="M1502.4 503.3h7.2M1506 499.7v7.2" stroke="#e0fffa" stroke-width="1.2"/><path d="M1513.6 503.3h8.8M1518 498.90000000000003v8.8" stroke="#e0fffa" stroke-width="1.2"/><path d="M1526.4 503.3h7.2M1530 499.7v7.2" stroke="#e0fffa" stroke-width="1.2"/><path d="M1507.4 510.5h7.2M1511 506.9v7.2" stroke="#e0fffa" stroke-width="1.2"/><path d="M1521.4 510.5h7.2M1525 506.9v7.2" stroke="#e0fffa" stroke-width="1.2"/><path d="M1515 515.5h6M1518 512.5v6" stroke="#e0fffa" stroke-width="1.2"/><rect x="1513.9" y="471" width="10.5" height="10.300000000000011" fill="#fff" stroke="#111" stroke-width="1"/><path d="M1521.15 471.84999999999997L1516.5500000000002 476.95H1518.95L1517.15 480.45L1521.75 475.34999999999997H1519.3500000000001z" fill="#111"/><path d="M1488.9 495.1H1496.9V505.3H1488.9L1492.1000000000001 500.20000000000005z" fill="#c9e060" stroke="#6f8a2a" stroke-width="0.6"/><path d="M503.6 759q0-3 3-3h16.099999999999966q0 1.5 0 1.5q0-1.5 0-1.5h16.099999999999966q3 0 3 3v29.700000000000045q0 3-3 3h-32.19999999999993q-3 0-3-3z" fill="#14a08b"/><path d="M508.1 761.5l14.599999999999966 5v23.700000000000045l-14.599999999999966-5z M537.3 761.5l-14.599999999999966 5v23.700000000000045l14.599999999999966-5z" fill="#f4fffd"/><path d="M508.1 784.2l14.599999999999966 5l14.599999999999966-5" fill="none" stroke="#14a08b" stroke-width="1"/><path d="M508.1 786.2l14.599999999999966 5.2l14.599999999999966-5.2" fill="none" stroke="#f4fffd" stroke-width="1.6"/><path d="M522.7 766.5v21.700000000000045" stroke="#333" stroke-width="0.9"/><rect x="517.2" y="744.2" width="10.799999999999955" height="10.5" fill="#fff" stroke="#111" stroke-width="1"/><path d="M524.6 745.1500000000001L520.0 750.25H522.4L520.6 753.75L525.2 748.6500000000001H522.8000000000001z" fill="#111"/><path d="M544.3 768h3.1950000000000105q3.9050000000000127 1.1 3.9050000000000127 5.5q0 4.4 -3.9050000000000127 5.5h-3.1950000000000105z" fill="#c9e060" stroke="#6f8a2a" stroke-width="0.6"/><circle cx="714.3" cy="773" r="18.6" fill="#1b64a8"/><path d="M704 765l1.5 2v18h18v-18l1.5-2v22h-21z" fill="#f2faff"/><rect x="705.5" y="770" width="18" height="15" fill="#f2faff"/><path d="M711.5 783.5l4-14q1-5 5-6.5" fill="none" stroke="#1b64a8" stroke-width="3.2"/><path d="M711.5 783.5l4-14q1-5 5-6.5" fill="none" stroke="#f2faff" stroke-width="1.5"/><circle cx="702.7" cy="748.8" r="4.8" fill="#111"/><circle cx="702.7" cy="748.5" r="2.3" fill="none" stroke="#fff" stroke-width="1.3"/><path d="M703.5 749.8l1.8 1.8" stroke="#fff" stroke-width="1.3"/><rect x="722.5" y="744.2" width="9.899999999999977" height="10.199999999999932" fill="#fff" stroke="#111" stroke-width="1"/><path d="M729.45 745.0L724.85 750.0999999999999H727.25L725.45 753.5999999999999L730.0500000000001 748.5H727.6500000000001z" fill="#111"/><path d="M685.9 768H692.9V778.7H685.9L688.6999999999999 773.35z" fill="#c9e060" stroke="#6f8a2a" stroke-width="0.6"/><path d="M736.7 768h3.0599999999999796q3.7399999999999753 1.0700000000000045 3.7399999999999753 5.350000000000023q0 4.280000000000018 -3.7399999999999753 5.350000000000023h-3.0599999999999796z" fill="#c9e060" stroke="#6f8a2a" stroke-width="0.6"/><circle cx="906.7" cy="773.6" r="18.8" fill="#1b64a8"/><circle cx="894.5" cy="772.5" r="2.6" fill="#f2faff"/><circle cx="918.6" cy="772.5" r="2.6" fill="#f2faff"/><path d="M901 771l5 4.2 8-9.5" fill="none" stroke="#f2faff" stroke-width="3"/><rect x="901.4" y="744.2" width="10.5" height="10.199999999999932" fill="#fff" stroke="#111" stroke-width="1"/><path d="M908.65 745.0L904.05 750.0999999999999H906.4499999999999L904.65 753.5999999999999L909.25 748.5H906.85z" fill="#111"/><path d="M877.4 768H884.8V778.7H877.4L880.36 773.35z" fill="#c9e060" stroke="#6f8a2a" stroke-width="0.6"/><path d="M928.5 768h3.0599999999999796q3.7399999999999753 1.0700000000000045 3.7399999999999753 5.350000000000023q0 4.280000000000018 -3.7399999999999753 5.350000000000023h-3.0599999999999796z" fill="#c9e060" stroke="#6f8a2a" stroke-width="0.6"/><circle cx="1062.5" cy="773.4" r="18.4" fill="#1b64a8"/><path d="M1058.5 764.5h7v5.5l7.5 11.5q2 5.5-4 5.5h-14q-6 0-4-5.5l7.5-11.5z" fill="#f2faff"/><path d="M1054 780.5q8.5-4 17 0q0 3.5-3 3.5h-11q-3 0-3-3.5z" fill="#1b64a8"/><circle cx="1060.5" cy="758" r="1.3" fill="#9fe0ff"/><circle cx="1063.5" cy="761.5" r="1.7" fill="#9fe0ff"/><circle cx="1061" cy="775" r="1.8" fill="none" stroke="#1b64a8" stroke-width="0.9"/><circle cx="1065" cy="777.5" r="1" fill="#111"/><circle cx="1050.9" cy="748.9" r="4.8" fill="#111"/><circle cx="1050.9" cy="748.6" r="2.3" fill="none" stroke="#fff" stroke-width="1.3"/><path d="M1051.7 749.9l1.8 1.8" stroke="#fff" stroke-width="1.3"/><rect x="1070" y="744.2" width="10.099999999999909" height="10.199999999999932" fill="#fff" stroke="#111" stroke-width="1"/><path d="M1077.05 745.0L1072.45 750.0999999999999H1074.85L1073.05 753.5999999999999L1077.6499999999999 748.5H1075.25z" fill="#111"/><path d="M1033 768H1041V778.7H1033L1036.2 773.35z" fill="#c9e060" stroke="#6f8a2a" stroke-width="0.6"/><path d="M1085 768h3.2400000000000206q3.9600000000000253 1.0700000000000045 3.9600000000000253 5.350000000000023q0 4.280000000000018 -3.9600000000000253 5.350000000000023h-3.2400000000000206z" fill="#c9e060" stroke="#6f8a2a" stroke-width="0.6"/><path d="M1277.8 754.7H1315.1V791.7H1277.8L1283 773z" fill="#e0623b"/><path d="M1287 759.5H1306l1.5 5.5M1287 759.5L1298 773L1286.5 787H1306.5l2-5.5" fill="none" stroke="#fff4ef" stroke-width="2.4"/><rect x="1291.4" y="744.2" width="11.0" height="10.199999999999932" fill="#fff" stroke="#111" stroke-width="1"/><path d="M1298.9 745.0L1294.3000000000002 750.0999999999999H1296.7L1294.9 753.5999999999999L1299.5 748.5H1297.1000000000001z" fill="#111"/><path d="M1267.3 768H1275V778.7H1267.3L1270.3799999999999 773.35z" fill="#c9e060" stroke="#6f8a2a" stroke-width="0.6"/><path d="M1318.5 768h3.330000000000041q4.07000000000005 1.0700000000000045 4.07000000000005 5.350000000000023q0 4.280000000000018 -4.07000000000005 5.350000000000023h-3.330000000000041z" fill="#c9e060" stroke="#6f8a2a" stroke-width="0.6"/><rect x="1507.3" y="755.3" width="37.5" height="36.4" rx="3.5" fill="#14a08b"/><rect x="1519.5" y="762" width="4.5" height="4" fill="#e6fffb"/><rect x="1529" y="762" width="4.5" height="4" fill="#e6fffb"/><path d="M1518.5 767H1524.5V784.5H1513.5z M1534.5 767H1528.5V784.5H1539.5z" fill="#e6fffb"/><rect x="1524" y="767.5" width="5" height="9" fill="#e6fffb"/><rect x="1513" y="785.5" width="10" height="2.5" fill="#e6fffb"/><rect x="1530" y="785.5" width="10" height="2.5" fill="#e6fffb"/><rect x="1521.4" y="744.2" width="11.099999999999909" height="10.199999999999932" fill="#fff" stroke="#111" stroke-width="1"/><path d="M1528.95 745.0L1524.3500000000001 750.0999999999999H1526.75L1524.95 753.5999999999999L1529.55 748.5H1527.15z" fill="#111"/><path d="M1496.8 768H1505.1V778.7H1496.8L1500.12 773.35z" fill="#c9e060" stroke="#6f8a2a" stroke-width="0.6"/></svg>
<svg class="a" style="left:0px;top:0px;" width="1" height="1" viewBox="0 0 1 1"><rect x="2170" y="185" width="70" height="35.6" fill="#5d6064"/><rect x="2171.9" y="188.9" width="29.7" height="29.7" rx="4.5" fill="#f6f8fc"/><rect x="2205.9" y="188.9" width="30.1" height="29.7" rx="4.5" fill="#f6f8fc"/><path d="M2182.2 204.2h9.7M2214.7 204.2h12.2M2220.8 198v11.2" stroke="#4e5361" stroke-width="1.8"/><path d="M2244.6 196.5l3.5-3.5 3.5 3.5" fill="none" stroke="#222" stroke-width="1.6"/><path d="M2244.6 1000l3.5 3.5 3.5-3.5" fill="none" stroke="#222" stroke-width="1.6"/></svg>
<div class="a" style="left:2257px;top:0px;width:4px;height:1136px;background:#0a2345"></div>
<div class="a" style="left:2261px;top:0px;width:2px;height:1136px;background:#e8ecf4"></div>
<div class="a" style="left:8px;top:180px;width:24px;height:810px;background:#e8eef2"></div>
<div class="a" style="left:352px;top:200px;width:18px;height:790px;background:#e8eef3"></div>
<div class="a" style="left:4px;top:148.5px;width:366px;height:31px;border:1px solid #cdd2dc;box-sizing:border-box;background:#eaeef9"></div>
<div class="t" style="left:11.34px;top:158.59px;font-size:11px;color:#7b7e86;transform:scaleX(1.0614);transform-origin:0 0;">Workflow - Configuration</div>
<svg class="a" style="left:0px;top:0px;" width="1" height="1" viewBox="0 0 1 1"><path d="M324.8 161.3L330.0 166.8L335.2 161.3" fill="none" stroke="#6b7080" stroke-width="1.5"/><path d="M349.0 156.8h10M351.0 156.8v6.5l-2.5 3.5h11l-2.5-3.5v-6.5M354.0 166.8v5" fill="none" stroke="#6b7080" stroke-width="1.4" stroke-linejoin="round"/><circle cx="13.5" cy="186.8" r="0.9" fill="#8a8e99"/><circle cx="17.7" cy="186.8" r="0.9" fill="#8a8e99"/><circle cx="21.9" cy="186.8" r="0.9" fill="#8a8e99"/><rect x="9.7" y="193.5" width="19.8" height="19" fill="#e4eefa" stroke="#2f6d90" stroke-width="1.2"/><polygon points="25.50,202.90 23.70,204.89 23.57,207.57 20.89,207.70 18.90,209.50 16.91,207.70 14.23,207.57 14.10,204.89 12.30,202.90 14.10,200.91 14.23,198.23 16.91,198.10 18.90,196.30 20.89,198.10 23.57,198.23 23.70,200.91" fill="none" stroke="#656b78" stroke-width="1.2" stroke-linejoin="round"/><circle cx="18.9" cy="202.9" r="2.2" fill="none" stroke="#656b78" stroke-width="1.2"/><circle cx="18.8" cy="225.5" r="6.6" fill="none" stroke="#656b78" stroke-width="1.3"/><path d="M16.6 223.5a2.3 2.3 0 1 1 3.2 2.1q-1 .5-1 1.6v.6" fill="none" stroke="#656b78" stroke-width="1.3"/><circle cx="18.8" cy="229.6" r="0.8" fill="#656b78"/><rect x="32" y="199" width="323" height="1" fill="#d9dde6"/><rect x="32" y="197.8" width="45" height="2.2" fill="#1a72b8"/><path d="M48.5 361.8V227.7h6 M139.5 227.7H355V361.8H48.5" fill="none" stroke="#d3d7df" stroke-width="1"/><rect x="181.9" y="248.5" width="170" height="28.69999999999999" rx="3" fill="#fff" stroke="#d3d7e0" stroke-width="1"/><path d="M336.3 261.5L340.8 266.5L345.3 261.5" fill="none" stroke="#9ca0aa" stroke-width="1.3"/><rect x="181.9" y="286" width="170" height="28.399999999999977" rx="3" fill="#fff" stroke="#d3d7e0" stroke-width="1"/><path d="M336.3 299L340.8 304L345.3 299" fill="none" stroke="#9ca0aa" stroke-width="1.3"/><rect x="181.9" y="323.1" width="170" height="28.399999999999977" rx="3" fill="#fff" stroke="#d3d7e0" stroke-width="1"/><path d="M336.3 336.1L340.8 341.1L345.3 336.1" fill="none" stroke="#9ca0aa" stroke-width="1.3"/><rect x="32" y="991.8" width="327" height="19" fill="#eef1f8"/><rect x="54" y="993.8" width="270" height="14.8" fill="#cdcdcd"/><path d="M47.5 997.5L43.8 1001.3L47.5 1005" fill="none" stroke="#333" stroke-width="1.6"/><path d="M345 997.5L348.7 1001.3L345 1005" fill="none" stroke="#333" stroke-width="1.6"/><circle cx="18.9" cy="1011.2" r="6.6" fill="none" stroke="#5f6b78" stroke-width="1.3"/><path d="M15.8 1011.4l2.3 2.3 4-4" fill="none" stroke="#5f6b78" stroke-width="1.3"/><rect x="3" y="1026.3" width="369" height="4.4" fill="#b3bfdd"/></svg>
<div class="t" style="left:36.89px;top:185.22px;font-size:11.2px;color:#3f6f93;transform:scaleX(0.9158);transform-origin:0 0;">Canvas</div>
<div class="t" style="left:82.24px;top:185.22px;font-size:11.2px;color:#1a1a1a;transform:scaleX(1.0369);transform-origin:0 0;">Workflow</div>
<div class="t" style="left:139.48px;top:185.22px;font-size:11.2px;color:#1a1a1a;transform:scaleX(1.0268);transform-origin:0 0;">Runtime</div>
<div class="t" style="left:191.35px;top:185.22px;font-size:11.2px;color:#1a1a1a;transform:scaleX(0.9506);transform-origin:0 0;">Events</div>
<div class="t" style="left:233.57px;top:185.22px;font-size:11.2px;color:#1a1a1a;transform:scaleX(1.0384);transform-origin:0 0;">Meta Info</div>
<div class="t" style="left:57.13px;top:221.09px;font-size:11px;color:#1a1a1a;transform:scaleX(1.0294);transform-origin:0 0;">Canvas Options</div>
<div class="t" style="left:63.56px;top:258.27px;font-size:11.5px;color:#1a1a1a;transform:scaleX(1.0202);transform-origin:0 0;">Layout Direction:</div>
<div class="t" style="left:64.50px;top:295.17px;font-size:11.5px;color:#1a1a1a;transform:scaleX(1.0486);transform-origin:0 0;">Annotations:</div>
<div class="t" style="left:63.93px;top:332.07px;font-size:11.5px;color:#1a1a1a;transform:scaleX(0.9994);transform-origin:0 0;">Connection Progress:</div>
<div class="t" style="left:183.45px;top:257.52px;font-size:11.2px;color:#1a1a1a;transform:scaleX(1.0599);transform-origin:0 0;">Horizontal</div>
<div class="t" style="left:183.43px;top:294.42px;font-size:11.2px;color:#1a1a1a;transform:scaleX(1.0779);transform-origin:0 0;">Hide</div>
<div class="t" style="left:183.91px;top:331.42px;font-size:11.2px;color:#1a1a1a;transform:scaleX(0.9651);transform-origin:0 0;">Show Only When Running</div>
<div class="a" style="left:4px;top:1031.6px;width:366px;height:31px;border:1px solid #cdd2dc;box-sizing:border-box;background:#eaeef9"></div>
<div class="t" style="left:11.02px;top:1041.69px;font-size:11px;color:#7b7e86;transform:scaleX(0.9741);transform-origin:0 0;">Overview</div>
<svg class="a" style="left:0px;top:0px;" width="1" height="1" viewBox="0 0 1 1"><path d="M324.2 1044.3L329.45 1049.8L334.7 1044.3" fill="none" stroke="#6b7080" stroke-width="1.5"/><path d="M348.5 1039.3999999999999h10M350.5 1039.3999999999999v6.5l-2.5 3.5h11l-2.5-3.5v-6.5M353.5 1049.3999999999999v5" fill="none" stroke="#6b7080" stroke-width="1.4" stroke-linejoin="round"/><rect x="3" y="1063" width="369" height="68" fill="#f0f0f0"/><rect x="140" y="1067" width="96" height="53.5" fill="#f0f0f0" stroke="#000" stroke-width="2"/><rect x="139" y="1122" width="97" height="4" fill="#cfcfcf"/><path d="M149 1086.3H215.5M150 1105H216M168 1086.5V1105M191.5 1086.5V1105M193.5 1086.5V1105" stroke="#f0a050" stroke-width="1.6" fill="none"/><rect x="162" y="1085" width="2" height="2.4" fill="#444"/><rect x="178" y="1085" width="2" height="2.4" fill="#444"/><rect x="194" y="1085" width="2" height="2.4" fill="#444"/><rect x="206" y="1085" width="2" height="2.4" fill="#444"/><rect x="214" y="1085" width="2" height="2.4" fill="#444"/><rect x="162" y="1103.8" width="2" height="2.4" fill="#444"/><rect x="174" y="1103.8" width="2" height="2.4" fill="#444"/><rect x="183" y="1103.8" width="2" height="2.4" fill="#444"/><rect x="186" y="1103.8" width="2" height="2.4" fill="#444"/><rect x="204" y="1103.8" width="2" height="2.4" fill="#444"/></svg>
<div class="t" style="left:381.42px;top:160.62px;font-size:12.5px;color:#111;transform:scaleX(0.9752);transform-origin:0 0;">Dark background.yxwz*</div>
<svg class="a" style="left:0px;top:0px;" width="1" height="1" viewBox="0 0 1 1"><path d="M532.2 162L540.6 170.3M540.6 162L532.2 170.3" stroke="#111" stroke-width="1.5"/><rect x="550.5" y="150.5" width="29" height="28" rx="2" fill="#e8ecf6" stroke="#d3d8e2" stroke-width="1"/><path d="M559 165.1h12M565 159.1v12" stroke="#6b7080" stroke-width="1.5"/><rect x="2087.5" y="150.5" width="29" height="28.8" rx="2" fill="#eaeef8" stroke="#d9dde6" stroke-width="1"/><rect x="2119.6" y="150.5" width="29" height="28.8" rx="2" fill="#eaeef8" stroke="#d9dde6" stroke-width="1"/><rect x="2151.7" y="150.5" width="29" height="28.8" rx="2" fill="#eaeef8" stroke="#d9dde6" stroke-width="1"/><path d="M2097 161.8l3.5 3.5-3.5 3.5M2102 161.8l3.5 3.5-3.5 3.5" fill="none" stroke="#6b7080" stroke-width="1.4"/><path d="M2128.5 169.5a6 6 0 1 0-0.5-5.5" fill="none" stroke="#6b7080" stroke-width="1.5"/><path d="M2126 162.5l2 3 2.8-2.2" fill="none" stroke="#6b7080" stroke-width="1.4"/><path d="M2134.2 161.5v4l2.6 1.6" fill="none" stroke="#6b7080" stroke-width="1.4"/><path d="M2159.5 171.5l9-9" stroke="#6b7080" stroke-width="1.5"/><circle cx="2164.5" cy="158.8" r="0.9" fill="#6b7080"/><circle cx="2170" cy="160" r="0.9" fill="#6b7080"/><circle cx="2172" cy="164.5" r="0.9" fill="#6b7080"/><circle cx="2167.5" cy="157" r="0.6" fill="#6b7080"/><rect x="2184" y="150.4" width="70.7" height="28.9" rx="4" fill="#0f6fd0"/><path d="M2200 160l9 5.7-9 5.7z" fill="none" stroke="#fff" stroke-width="1.5" stroke-linejoin="round"/></svg>
<div class="t" style="left:2213.57px;top:159.62px;font-size:12.5px;color:#fff;transform:scaleX(1.0272);transform-origin:0 0;">Run</div>
<div class="a" style="left:375px;top:1011px;width:1882px;height:4px;background:#aabcd9"></div>
<div class="a" style="left:375px;top:1015px;width:1882px;height:116px;background:#eaeef9"></div>
<div class="a" style="left:376.3px;top:1016px;width:1879.5px;height:31.5px;border:1px solid #cdd2dc;box-sizing:border-box;background:#eaeef9"></div>
<div class="t" style="left:382.71px;top:1026.69px;font-size:11px;color:#7b7e86;transform:scaleX(1.0170);transform-origin:0 0;">Results - Workflow - Messages</div>
<svg class="a" style="left:0px;top:0px;" width="1" height="1" viewBox="0 0 1 1"><path d="M2210.6 1029L2215.4 1034.5L2220.2 1029" fill="none" stroke="#6b7080" stroke-width="1.5"/><path d="M2234.0 1024.8h10M2236.0 1024.8v6.5l-2.5 3.5h11l-2.5-3.5v-6.5M2239.0 1034.8v5" fill="none" stroke="#6b7080" stroke-width="1.4" stroke-linejoin="round"/><rect x="379.4" y="1051" width="27.2" height="74.3" rx="2" fill="#dde2ec"/><path d="M383 1055h20" stroke="#9aa0ad" stroke-width="1" stroke-dasharray="1.5 1.5"/><rect x="380" y="1060.2" width="26" height="27.2" fill="#e3eefa" stroke="#2f6d96" stroke-width="1.3"/><rect x="385.5" y="1065.5" width="15" height="4" rx="1" fill="none" stroke="#5c6578" stroke-width="1.4"/><rect x="385.5" y="1072" width="15" height="4" rx="1" fill="none" stroke="#5c6578" stroke-width="1.4"/><rect x="385.5" y="1078.5" width="15" height="4" rx="1" fill="none" stroke="#5c6578" stroke-width="1.4"/><circle cx="417.7" cy="1063.8" r="6.6" fill="none" stroke="#c0474b" stroke-width="1.5"/><path d="M417.7 1060v4.5" stroke="#666" stroke-width="1.4"/><circle cx="417.7" cy="1066.8" r="0.8" fill="#666"/><circle cx="485.9" cy="1063.8" r="6.6" fill="none" stroke="#d6806f" stroke-width="1.5"/><path d="M485.9 1060v4.5" stroke="#888" stroke-width="1.4"/><circle cx="485.9" cy="1066.8" r="0.8" fill="#888"/><path d="M585.3 1056.5l7.8 13.5h-15.6z" fill="none" stroke="#b39a80" stroke-width="1.4" stroke-linejoin="round"/><path d="M585.3 1061v4.5" stroke="#777" stroke-width="1.3"/><circle cx="585.3" cy="1067.8" r="0.7" fill="#777"/><path d="M666 1057h14v10.5h-7l-3.5 3.5v-3.5h-3.5z" fill="none" stroke="#5c6578" stroke-width="1.4" stroke-linejoin="round"/><path d="M755 1056.5h11l3 3v11.5h-14z M758 1056.5v4h7v-4 M758 1071v-5h8v5" fill="none" stroke="#5c6578" stroke-width="1.4" stroke-linejoin="round"/><rect x="813" y="1054.4" width="24.5" height="19.4" fill="#eef2fa" stroke="#3a7ea8" stroke-width="1"/><rect x="2111" y="1053.8" width="54" height="20.8" fill="#fff" stroke="#dfe3ea" stroke-width="1"/><path d="M2164.8 1053.8h79.2a3 3 0 0 1 3 3v14.8a3 3 0 0 1-3 3h-79.2z" fill="#0f6fce"/><rect x="2233.5" y="1080" width="20" height="50" fill="#edf0f6"/><path d="M2243.6 1090.5l3.5-3.5 3.5 3.5" fill="none" stroke="#c8c8c8" stroke-width="1.5"/><path d="M2243.6 1116.5l3.5 3.5 3.5-3.5" fill="none" stroke="#c8c8c8" stroke-width="1.5"/></svg>
<div class="t" style="left:428.86px;top:1057.87px;font-size:11.5px;color:#111;transform:scaleX(0.9570);transform-origin:0 0;">0 Errors</div>
<div class="t" style="left:496.54px;top:1057.87px;font-size:11.5px;color:#111;transform:scaleX(0.9958);transform-origin:0 0;">0 Conv Errors</div>
<div class="t" style="left:595.53px;top:1057.87px;font-size:11.5px;color:#111;transform:scaleX(1.0287);transform-origin:0 0;">0 Warnings</div>
<div class="t" style="left:683.35px;top:1057.87px;font-size:11.5px;color:#111;transform:scaleX(0.9767);transform-origin:0 0;">0 Messages</div>
<div class="t" style="left:772.36px;top:1057.87px;font-size:11.5px;color:#111;transform:scaleX(0.9574);transform-origin:0 0;">0 Files</div>
<div class="t" style="left:817.80px;top:1057.87px;font-size:11.5px;color:#111;transform:scaleX(1.1317);transform-origin:0 0;">All</div>
<div class="t" style="left:2115.00px;top:1059.27px;font-size:11.5px;color:#111;transform:scaleX(0.9767);transform-origin:0 0;">Last Run</div>
<div class="t" style="left:2169.88px;top:1059.27px;font-size:11.5px;color:#fff;transform:scaleX(1.0769);transform-origin:0 0;">Configuration</div>
<div class="a" style="left:0px;top:1131px;width:2263px;height:3px;background:#0a2345"></div>
<div class="a" style="left:0px;top:1134px;width:2263px;height:2px;background:#eef3f9"></div>
<div class="a" style="left:2189px;top:38px;width:80px;height:62.4px;background:#4b4f58;border-radius:6px;border:1px solid #3a3d44;box-sizing:border-box;box-shadow:0 3px 8px rgba(0,0,0,0.18)"></div>
<div class="a" style="left:2198px;top:52.5px;width:34px;height:32.5px;background:#e8191c;border-radius:6px"></div>
<div class="t" style="left:2206px;top:56px;font-size:23px;color:#fff;font-family:'Liberation Serif',serif;font-weight:bold;">B</div>
<div class="t" style="left:2239.78px;top:54.07px;font-size:11.5px;color:#fff;transform:scaleX(1.0912);transform-origin:0 0;font-weight:bold;">Rap</div>
<div class="t" style="left:2239.69px;top:72.07px;font-size:11.5px;color:#fff;transform:scaleX(0.9913);transform-origin:0 0;">De u</div>
</body></html>
